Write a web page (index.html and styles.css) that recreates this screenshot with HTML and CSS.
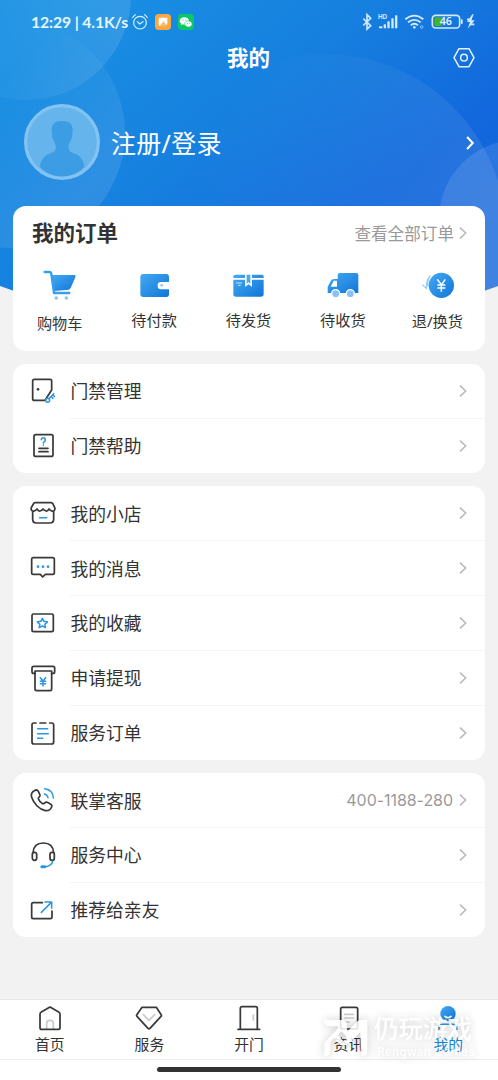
FILE: index.html
```html
<!DOCTYPE html>
<html lang="zh-CN">
<head>
<meta charset="utf-8">
<title>我的</title>
<link rel="stylesheet" href="styles.css">
</head>
<body>
<div class="app">
  <svg class="backdrop" viewBox="0 0 498 340" aria-hidden="true">
    <defs>
      <linearGradient id="sky" gradientUnits="userSpaceOnUse" x1="80" y1="0" x2="360" y2="330">
        <stop offset="0" stop-color="#1990e3"/><stop offset=".45" stop-color="#167fdf"/><stop offset=".8" stop-color="#1268dc"/><stop offset="1" stop-color="#1264da"/>
      </linearGradient>
      <linearGradient id="blue" x1="0" y1="0" x2="1" y2="1">
        <stop offset="0" stop-color="#45a9f3"/><stop offset="1" stop-color="#0f76d8"/>
      </linearGradient>
      <linearGradient id="fadeTop" gradientUnits="userSpaceOnUse" x1="0" y1="60" x2="120" y2="20"><stop offset="0" stop-color="#fff" stop-opacity=".04"/><stop offset="1" stop-color="#fff" stop-opacity=".11"/></linearGradient>
      <linearGradient id="fadeMid" gradientUnits="userSpaceOnUse" x1="20" y1="60" x2="120" y2="150"><stop offset="0" stop-color="#fff" stop-opacity="0"/><stop offset="1" stop-color="#fff" stop-opacity=".1"/></linearGradient>
      <linearGradient id="fadeBig" x1="0.3" y1="0" x2="1" y2="0.4"><stop offset="0" stop-color="#fff" stop-opacity="0"/><stop offset="1" stop-color="#fff" stop-opacity=".1"/></linearGradient>
      <clipPath id="sheet"><path d="M0 0H498V286Q249 380 0 286Z"/></clipPath>
    </defs>
    <g clip-path="url(#sheet)">
      <rect width="498" height="340" fill="url(#sky)"/>
      <circle cx="26" cy="-5" r="105" fill="url(#fadeTop)"/>
      <circle cx="10" cy="133" r="115" fill="url(#fadeMid)"/>
      <circle cx="325" cy="235" r="181" fill="url(#fadeBig)"/>
      <circle cx="518" cy="219" r="79" fill="#fff" fill-opacity=".11"/>
    </g>
  </svg>

  <div class="status">
    <span class="clock">12:29 | 4.1K/s</span>
    <svg class="alarm" viewBox="0 0 54 54"><g fill="none" stroke="#d9f1ff" stroke-width="3.6" stroke-linecap="round"><circle cx="27" cy="29" r="19"/><path d="M5 13 13 5M49 13 41 5M19 26 26 33 36 26"/></g></svg>
    <svg class="badge" viewBox="0 0 48 48"><rect width="48" height="48" rx="11" fill="#fca842"/><path d="M11 14Q11 11 14 11H37V28Q36 34 31 34H25L14 36Q11 36 11 33Z" fill="#fff"/><path d="M13 36 26 22 34 34Z" fill="#fdbb6b"/></svg>
    <svg class="badge wechat" viewBox="0 0 48 48"><rect width="48" height="48" rx="11" fill="#08c967"/><path d="M19 10c-8 0-14 5-14 11 0 4 2 6 5 8l-1 5 5-3 6 1c7 0 13-5 13-11s-6-11-14-11" fill="#fff"/><path d="M31 21c-6 0-11 4-11 9s5 9 11 9l4-1 4 2-1-4c3-2 4-4 4-6 0-5-5-9-11-9" fill="#fff" stroke="#08c967" stroke-width="1.5"/><g fill="#08c967"><circle cx="15" cy="18" r="1.8"/><circle cx="24" cy="18" r="1.8"/><circle cx="28" cy="28" r="1.5"/><circle cx="35" cy="28" r="1.5"/></g></svg>
    <span class="grow"></span>
    <svg class="signals" viewBox="0 0 342 54">
      <path d="M4 17 26 38 15 48V5L26 16 4 37" fill="none" stroke="#cfe8fd" stroke-width="5"/>
      <text class="hd" x="48" y="17">HD</text>
      <g fill="#d6eafd"><rect x="51" y="40" width="10" height="6" rx="1"/><rect x="65" y="34" width="7" height="12" rx="2"/><rect x="76" y="25" width="7" height="21" rx="2"/><rect x="88" y="16" width="7" height="30" rx="2"/><rect x="99" y="7" width="7" height="39" rx="2"/></g>
      <g fill="none" stroke="#d6eafd" stroke-width="5.5"><path d="M130 19Q157-3 184 19"/><path d="M138 28Q157 13 176 28"/><path d="M146 37Q157 27 168 37"/></g><circle cx="157" cy="43" r="4" fill="#d6eafd"/><circle cx="179" cy="42" r="4" fill="none" stroke="#8fc1f3" stroke-width="3"/>
      <rect x="211" y="7" width="82" height="38" rx="10" fill="none" stroke="#d2eafc" stroke-width="5"/><path d="M222 13H239V39H222Q217 39 217 34V18Q217 13 222 13" fill="#43b52d"/><rect x="297" y="19" width="5" height="14" rx="2" fill="#d2eafc"/>
      <text class="charge" x="233" y="37">46</text>
      <path d="M331 4 315 27H324L317 47 338 22H328L335 4Z" fill="#d2eafc"/><path d="M315 19H328M324 34H337" stroke="#d2eafc" stroke-width="5"/>
    </svg>
  </div>

  <header class="titlebar">
    <h1>我的</h1>
    <svg class="gear" viewBox="0 0 66 66"><g fill="none" stroke="#e4f3ff" stroke-width="4.5" stroke-linejoin="round"><path d="M18 5H48L63 32 48 59H18L3 32Z"/><circle cx="33" cy="32" r="10"/></g></svg>
  </header>

  <section class="profile">
    <svg class="avatar" viewBox="0 0 228 228"><circle cx="114" cy="114" r="109" fill="#66b4ec" stroke="#83c3f2" stroke-width="10"/><path d="M114 51c22 0 33 9 32 30l-2 18c-2 12-9 16-10 26-2 14 5 19 19 24 17 6 26 20 28 39-17 18-40 29-67 29s-51-11-66-29c2-19 11-33 28-39 14-5 21-10 19-24-1-10-8-14-10-26l-2-18c-1-21 9-30 31-30" fill="#3c9de5"/></svg>
    <span class="login">注册/登录</span>
    <svg class="go-white" viewBox="0 0 24 42"><path d="M3 5 18 21 3 37" fill="none" stroke="#fff" stroke-width="5.5"/></svg>
  </section>

  <main>
    <section class="card orders">
      <div class="orders-head"><h2>我的订单</h2><span class="all">查看全部订单</span><svg class="chev" viewBox="0 0 24 36"><path d="M3 2 20 18 3 34"/></svg></div>
      <div class="orders-grid">
        <a class="order low3"><svg viewBox="0 0 108 108"><path d="M28 21H98Q103 22 100 28L86 60Q84 64 79 65L37 69Z" fill="url(#blue)"/><path d="M8 12H22Q27 12 28 18L36 75H82" fill="none" stroke="#389ff0" stroke-width="7" stroke-linecap="round" stroke-linejoin="round"/><circle cx="43" cy="90" r="5.5" fill="#8ac5f7"/><circle cx="73" cy="90" r="5.5" fill="#8ac5f7"/></svg><span>购物车</span></a>
        <a class="order"><svg viewBox="0 0 108 108"><path d="M19 18H88Q96 18 96 27V42H72Q62 42 62 52V54Q62 64 72 64H96V79Q96 87 88 87H19Q10 87 10 78V27Q10 18 19 18" fill="url(#blue)"/><circle cx="74" cy="52" r="4" fill="#91c9f8"/></svg><span>待付款</span></a>
        <a class="order"><svg viewBox="0 0 108 108"><path d="M13 20H42V30H7V25Q8 20 13 20M63 20H93Q98 21 98 25V30H63ZM7 35H42V57L53 49 63 57V35H98V78Q98 86 90 86H15Q7 86 7 78Z" fill="url(#blue)"/><path d="M47 20H58V47L53 43 47 47Z" fill="#4da9ef"/><path d="M15 45H33M21 52H29" stroke="#c9e5fc" stroke-width="3"/></svg><span>待发货</span></a>
        <a class="order"><svg viewBox="0 0 108 108"><path fill-rule="evenodd" d="M45 15H94Q100 15 100 21V75H8V56L17 40Q20 33 28 33H38V22Q38 15 45 15M26 38 17 56H36V38Z" fill="url(#blue)"/><g fill="#87c1f5" stroke="#fff" stroke-width="4"><circle cx="32" cy="77" r="12"/><circle cx="76" cy="77" r="12"/></g></svg><span>待收货</span></a>
        <a class="order low1"><svg viewBox="0 0 108 108"><circle cx="64" cy="52" r="38" fill="url(#blue)"/><path d="M52 34 64 50 76 34M64 50V71M52 51H76M52 60H76" fill="none" stroke="#fff" stroke-width="4.5"/><path d="M31 23Q18 37 19 61L7 50M24 56Q20 40 31 23" fill="none" stroke="#8ec8f6" stroke-width="3.5"/></svg><span>退/换货</span></a>
      </div>
    </section>

    <section class="card">
      <a class="row"><svg class="ico" viewBox="0 0 90 90"><path d="M50 73H19Q14 73 14 68V15Q14 10 19 10H66Q71 10 71 15V42L51 73"/><circle class="dot" cx="30" cy="40" r="4"/><g class="hue"><circle cx="59" cy="73" r="6"/><path d="M63 68 77 53M69 62 75 67M74 56 79 61"/></g></svg><span class="name">门禁管理</span><svg class="chev" viewBox="0 0 24 36"><path d="M3 2 20 18 3 34"/></svg></a>
      <a class="row"><svg class="ico" viewBox="0 0 90 90"><rect x="18" y="11" width="57" height="65" rx="5"/><path d="M33 52H60M33 62H60"/><path class="hue" d="M40 26Q40 20 46 20T52 27Q52 30 49 32T46 37M46 42V43"/></svg><span class="name">门禁帮助</span><svg class="chev" viewBox="0 0 24 36"><path d="M3 2 20 18 3 34"/></svg></a>
    </section>

    <section class="card">
      <a class="row"><svg class="ico" viewBox="0 0 90 90"><path d="M21 14H69Q73 14 75 18L81 31Q80 42 71 39Q66 37 63 33Q59 40 54 39Q48 37 45 33Q42 38 36 39Q31 40 27 33Q20 42 12 38Q8 35 10 29L16 18Q18 14 21 14ZM14 39V64Q14 75 25 75H66Q77 75 77 64V39"/><path class="hue" d="M35 59H56"/></svg><span class="name">我的小店</span><svg class="chev" viewBox="0 0 24 36"><path d="M3 2 20 18 3 34"/></svg></a>
      <a class="row"><svg class="ico" viewBox="0 0 90 90"><path d="M15 14H74Q79 14 79 19V60Q79 64 74 64H52L44 72 37 64H15Q11 64 11 60V19Q11 14 15 14Z"/><g class="dots"><circle cx="30" cy="41" r="4"/><circle cx="45" cy="41" r="4"/><circle cx="60" cy="41" r="4"/></g></svg><span class="name">我的消息</span><svg class="chev" viewBox="0 0 24 36"><path d="M3 2 20 18 3 34"/></svg></a>
      <a class="row"><svg class="ico" viewBox="0 0 90 90"><rect x="12" y="18" width="64" height="53" rx="5"/><path class="hue" d="M43 31 47.5 40 58 41.5 50.5 49 52.5 59 43 54 33.5 59 35.5 49 28 41.5 38.5 40Z"/></svg><span class="name">我的收藏</span><svg class="chev" viewBox="0 0 24 36"><path d="M3 2 20 18 3 34"/></svg></a>
      <a class="row"><svg class="ico" viewBox="0 0 90 90"><path d="M21 31H17Q12 31 12 26V15Q12 10 17 10H75Q80 10 80 15V26Q80 31 75 31H71"/><path d="M21 24H71V78Q71 83 66 83H26Q21 83 21 78Z"/><path class="hue" d="M37 44 45 54 53 44M45 54V69M37 55H53M37 62H53"/></svg><span class="name">申请提现</span><svg class="chev" viewBox="0 0 24 36"><path d="M3 2 20 18 3 34"/></svg></a>
      <a class="row"><svg class="ico" viewBox="0 0 90 90"><path d="M24 15H17Q12 15 12 21V72Q12 78 18 78H71Q77 78 77 72V21Q77 15 71 15H65M36 15H53"/><path class="hue" d="M29 32H59M29 47H61M29 61H44"/></svg><span class="name">服务订单</span><svg class="chev" viewBox="0 0 24 36"><path d="M3 2 20 18 3 34"/></svg></a>
    </section>

    <section class="card">
      <a class="row"><svg class="ico" viewBox="0 0 90 90"><path d="M21 16C13 20 8 28 11 37C17 56 35 74 52 77C61 78 68 73 71 66C73 61 70 58 66 56L58 52C51 49 49 58 44 56C39 53 33 47 31 41C30 37 37 36 36 30L31 19Q28 13 21 16Z"/><path class="hue" d="M50 11Q75 14 76 39M49 27Q58 29 60 38"/></svg><span class="name">联掌客服</span><span class="phone">400-1188-280</span><svg class="chev" viewBox="0 0 24 36"><path d="M3 2 20 18 3 34"/></svg></a>
      <a class="row"><svg class="ico" viewBox="0 0 90 90"><path d="M15 38Q17 9 46 9T77 38"/><rect x="13" y="37" width="13" height="24" rx="6"/><rect x="66" y="37" width="13" height="24" rx="6"/><path class="hue" d="M74 64Q71 78 52 80"/><rect class="mic" x="37" y="76" width="18" height="9" rx="4.5"/></svg><span class="name">服务中心</span><svg class="chev" viewBox="0 0 24 36"><path d="M3 2 20 18 3 34"/></svg></a>
      <a class="row"><svg class="ico" viewBox="0 0 90 90"><path d="M43 23H16Q11 23 11 28V66Q11 71 16 71H67Q72 71 72 66V48"/><path class="hue" d="M40 52 70 22M51 21H71V40"/></svg><span class="name">推荐给亲友</span><svg class="chev" viewBox="0 0 24 36"><path d="M3 2 20 18 3 34"/></svg></a>
    </section>
  </main>

  <nav class="tabs">
    <a class="tab"><svg class="ico" viewBox="0 0 90 90"><path class="soft" d="M35 77V62Q35 52 45 52T55 62V77"/><path d="M45 12 71 27Q75 29 75 34V74Q75 79 70 79H20Q15 79 15 74V34Q15 29 19 27Z"/></svg><span>首页</span></a>
    <a class="tab"><svg class="ico" viewBox="0 0 90 90"><path d="M24 13H67L82 36Q83 38 81 40L48 76Q45 80 42 76L9 40Q7 38 8 36Z"/><path class="soft" d="M28 35 45 52 62 35"/></svg><span>服务</span></a>
    <a class="tab"><svg class="ico" viewBox="0 0 90 90"><path d="M19 79V16Q19 11 24 11H65Q70 11 70 16V79M12 79H77"/><path class="soft" d="M58 36V51"/></svg><span>开门</span></a>
    <a class="tab"><svg class="ico" viewBox="0 0 90 90"><rect x="20" y="13" width="51" height="65" rx="5"/><path class="soft" d="M32 34H58M32 45H58M32 57H45"/></svg><span>资讯</span></a>
    <a class="tab on"><svg class="ico me" viewBox="0 0 90 90"><circle cx="45" cy="32" r="23" fill="url(#blue)" stroke="none"/><path d="M36 40Q45 48 54 40" stroke="#fff"/><path class="hue" d="M18 79Q18 64 32 64H58Q72 64 72 79"/></svg><span>我的</span></a>
    <div class="mark">
      <svg viewBox="0 0 135 117"><path d="M3 6H55Q72 6 72 22V42L104 9Q110 5 120 5H133V99Q133 115 114 115L112 43 81 73Q60 94 45 74L33 59 22 73V100Q22 115 4 115V75L45 31Q48 25 42 25H22Q6 25 3 6ZM45 51 58 67Q64 72 70 65V55L55 39Z" fill="#fff"/></svg>
      <div class="mark-text"><b>仍玩游戏</b><span>Rengwan Games</span></div>
    </div>
  </nav>
  <div class="home"><i></i></div>
</div>
</body>
</html>
```
FILE: styles.css
```css
* { box-sizing: border-box; }
body { margin: 0; background: #f2f2f2; font-family: "Noto Sans", "Noto Sans CJK SC", sans-serif; color: #333; }
h1, h2 { margin: 0; }
svg { display: block; flex: none; }

.app { position: relative; width: 498px; height: 1080px; display: flex; flex-direction: column; overflow: hidden; }
.backdrop { position: absolute; top: 0; left: 0; width: 498px; height: 340px; }
.status, .titlebar, .profile, main { position: relative; }

.status { height: 40px; padding: 4px 22px 0 31px; display: flex; align-items: center; color: #e4f6ff; }
.clock { width: 97px; margin-top: -2px; font-family: Lato, sans-serif; font-size: 15.8px; font-weight: 700; white-space: nowrap; letter-spacing: -.15px; }
.alarm { width: 18px; height: 18px; margin-left: 3px; }
.badge { width: 16px; height: 16px; margin-left: 6px; }
.wechat { margin-left: 7px; }
.grow { flex: 1; }
.signals { width: 114px; height: 18px; }
.hd { font: 700 19px "Liberation Sans", sans-serif; fill: #d6eafd; }
.charge { font: 600 32px "Noto Sans", sans-serif; fill: #e5f4ff; }

.titlebar { height: 34px; padding: 0 23px 0 65px; display: flex; align-items: center; }
.titlebar h1 { flex: 1; margin: -1px 20px 0 0; text-align: center; font-size: 21.5px; font-weight: 700; color: #fff; text-indent: -1px; }
.gear { width: 22px; height: 22px; margin-top: 2px; }

.profile { height: 132px; padding: 4px 23px 0 24px; display: flex; align-items: center; }
.avatar { width: 76px; height: 76px; }
.login { flex: 1; margin: -1px 0 0 11px; font-size: 25px; letter-spacing: .3px; color: #fff; }
.go-white { width: 9px; height: 16px; margin-top: 1px; }

main { padding: 0 13px; display: flex; flex-direction: column; gap: 12.8px; }
.card { background: #fff; border-radius: 13px; overflow: hidden; }
.orders { height: 144.8px; }
.orders-head { display: flex; align-items: center; height: 54px; padding: 0 18px 0 19px; }
.orders-head h2 { flex: 1; font-size: 21.5px; line-height: 30px; }
.all { font-size: 16.6px; color: #999; margin: -1px 5px 0 0; }
.chev { width: 8px; height: 12px; fill: none; stroke: #bcbcbc; stroke-width: 5; }
.orders-grid { display: grid; grid-template-columns: repeat(5, 1fr); padding-top: 8px; }
.order { display: flex; flex-direction: column; align-items: center; font-size: 15.2px; line-height: 20px; }
.order svg { width: 36px; height: 36px; }
.order span { margin: 6px 1px 0 0; }
.low3 span { margin-top: 9px; }
.low1 span { margin-top: 7px; }

.row { height: 54.8px; padding-left: 15px; display: flex; align-items: center; position: relative; }
.row .name { flex: 1; margin: -1px 0 0 12.5px; font-size: 17.8px; }
.row .chev { margin-right: 18px; }
.row + .row::before { content: ""; position: absolute; left: 57px; right: 0; top: -.5px; border-top: 1px solid #f4f4f4; }
.ico { width: 30px; height: 30px; fill: none; stroke: #393939; stroke-width: 5.2; stroke-linejoin: round; stroke-linecap: round; }
.ico .hue { stroke: #2c96e3; stroke-width: 4.6; }
.ico .dot { fill: #393939; stroke: none; }
.ico .dots, .ico .mic { fill: #2c96e3; stroke: none; }
.ico .soft { stroke: #cbcbcb; }
.phone { font: 16px Inter, sans-serif; color: #9a9a9a; margin: 0 6px 0 0; letter-spacing: -.05px; }

.tabs { position: relative; margin-top: auto; height: 61px; flex: none; background: #fff; border-top: 1px solid #e9e9e9; border-bottom: 1px solid #eee; display: grid; grid-template-columns: repeat(5, 1fr); }
.tab { display: flex; flex-direction: column; align-items: center; padding-top: 3px; font-size: 14.8px; line-height: 20px; }
.tab span { margin-top: 1px; }
.tab.on { color: #1787d8; }
.home { height: 20px; flex: none; background: #fff; display: flex; justify-content: center; padding-top: 7px; }
.home i { width: 184px; height: 5px; border-radius: 3px; background: #333; }

.mark { position: absolute; left: 323px; top: 14px; display: flex; filter: drop-shadow(0 0 5px rgba(0, 0, 0, .25)); opacity: .85; }
.mark svg { width: 45px; height: 39px; margin-top: 4px; }
.mark-text { margin-left: 6px; color: #fff; display: flex; flex-direction: column; }
.mark-text b { font-size: 24.5px; line-height: 30px; font-weight: 500; }
.mark-text span { font: 500 12.2px/15px Inter, sans-serif; white-space: nowrap; margin-left: 3px; }
```
